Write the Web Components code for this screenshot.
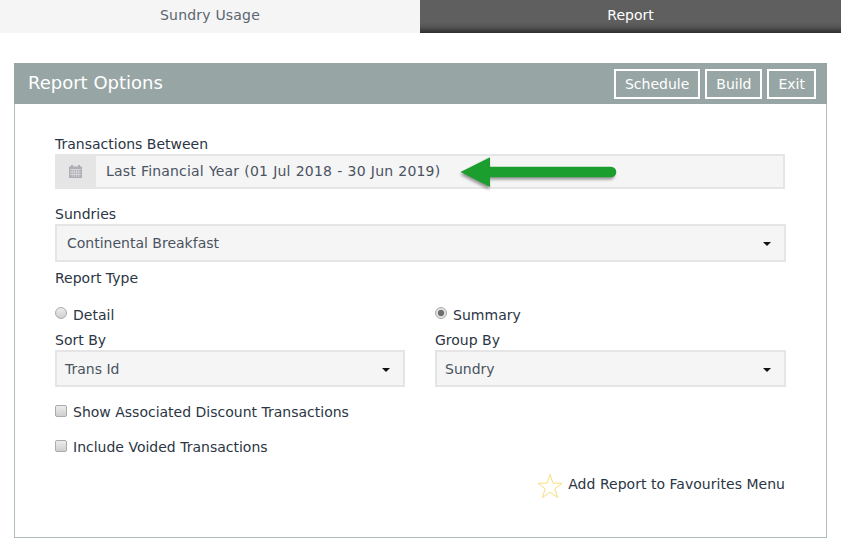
<!DOCTYPE html>
<html><head><meta charset="utf-8">
<style>
html,body{margin:0;padding:0;background:#fff}
body{font:14px/20px "DejaVu Sans",Verdana,sans-serif;color:#2b3544;width:841px;height:556px;overflow:hidden}
</style></head><body>
<tab-bar>
  <tab-item style="flex:0 0 420px">Sundry Usage</tab-item>
  <tab-item active style="flex:0 0 421px">Report</tab-item>
</tab-bar>
<report-panel heading="Report Options">
  <panel-button slot="actions">Schedule</panel-button>
  <panel-button slot="actions">Build</panel-button>
  <panel-button slot="actions">Exit</panel-button>

  <form-field label="Transactions Between">
    <date-input value="Last Financial Year (01 Jul 2018 - 30 Jun 2019)"></date-input>
  </form-field>
  <form-field label="Sundries" style="margin-top:15px">
    <select-box value="Continental Breakfast" style="--h:38px;--pad:10px;margin-right:-1px"></select-box>
  </form-field>
  <form-field label="Report Type" style="margin-top:6px"></form-field>
  <two-col style="margin-top:16px">
    <div>
      <choice-row type="radio">Detail</choice-row>
      <form-field label="Sort By" style="margin-top:6px"><select-box value="Trans Id"></select-box></form-field>
    </div>
    <div>
      <choice-row type="radio" checked>Summary</choice-row>
      <form-field label="Group By" style="margin-top:6px"><select-box value="Sundry"></select-box></form-field>
    </div>
  </two-col>
  <choice-row type="check" style="margin-top:15px">Show Associated Discount Transactions</choice-row>
  <choice-row type="check" style="margin-top:15px">Include Voided Transactions</choice-row>
  <favourite-link style="margin-top:13px">Add Report to Favourites Menu</favourite-link>
  <green-arrow></green-arrow>
</report-panel>

<script>
function def(name, css, html){
  customElements.define(name, class extends HTMLElement{
    connectedCallback(){
      if(this.shadowRoot) return;
      const r=this.attachShadow({mode:'open'});
      const get=a=>this.getAttribute(a)||'';
      r.innerHTML='<style>'+css+'</style>'+(typeof html==='function'?html(get,this):html);
    }
  });
}
def('tab-bar',':host{display:flex;height:33px}','<slot></slot>');
def('tab-item',`:host{display:flex;align-items:center;justify-content:center;background:#f5f5f5;color:#5b6670;padding-bottom:3px;box-sizing:border-box;letter-spacing:.2px}
:host([active]){background:linear-gradient(#5f5f5f 0,#5f5f5f 22px,#545454 27px,#3a3a3a 31px,#2d2d2d 33px);color:#fff;letter-spacing:0}`,'<slot></slot>');
def('report-panel',`:host{display:block;position:relative;margin:30px 14px 0;width:813px;height:475px;box-sizing:border-box;border:1px solid #b0bbbb;border-top:0}
header{height:41px;margin:0 -1px 0 -1px;background:#97a6a4;display:flex;align-items:center;justify-content:space-between;padding:0 11px 0 14px;color:#fff}
h2{margin:0;font:500 18px/24px "DejaVu Sans",Verdana,sans-serif;color:#fff;padding-bottom:1px}
nav{display:flex;gap:5px}
main{padding:30px 41px 0 40px;display:block}`,
g=>`<header><h2>${g('heading')}</h2><nav><slot name="actions"></slot></nav></header><main><slot></slot></main>`);
def('panel-button',`:host{display:block;height:30px;box-sizing:border-box;border:2px solid #fff;color:#fff;padding:0 9px;line-height:26px}`,'<slot></slot>');
def('form-field',`:host{display:block}
label{display:block;height:20px;line-height:20px}`,g=>`<label>${g('label')}</label><slot></slot>`);
const cal=`<svg width="13" height="14" viewBox="0 0 13 14"><path fill="#aeaeb6" d="M0 2.500h2V1h2v1.500h5V1h2v1.500h2V14H0z"/><path stroke="#e5e5e5" stroke-width=".6" fill="none" d="M1 5.500h11M1 8h11M1 10.500h11M3.200 5v8M5.400 5v8M7.600 5v8M9.800 5v8"/></svg>`;
def('date-input',`:host{display:flex;height:35px;box-sizing:border-box;border:2px solid #e5e5e5;background:#f5f5f5;color:#4a5361;line-height:31px}
i{width:39px;background:#e5e5e5;display:flex;align-items:center;justify-content:center}
svg{display:block;margin-left:-3px;margin-top:-1px}
span{padding-left:10px;letter-spacing:.17px;word-spacing:.5px}`,g=>`<i>${cal}</i><span>${g('value')}</span>`);
def('select-box',`:host{display:flex;align-items:center;justify-content:space-between;height:var(--h,37px);box-sizing:border-box;border:2px solid #e5e5e5;background:#f5f5f5;color:#4a5361;padding:0 13px 0 var(--pad,8px)}
b{width:0;height:0;border:4px solid transparent;border-top-color:#111;border-bottom:0;display:block;margin-top:2px}`,
g=>`<span>${g('value')}</span><b></b>`);
def('two-col',':host{display:grid;grid-template-columns:350px 351px;column-gap:30px;margin-right:-1px}','<slot></slot>');
def('choice-row',`:host{display:flex;align-items:center;gap:6px;height:20px;color:#2b3544}
i{width:12px;height:12px;box-sizing:border-box;display:block;background:linear-gradient(#ececec,#cfcfcf);border:1px solid #ababab;flex:none;position:relative;top:-1px}
:host([type=check]) i{border-radius:2px}
:host([type=radio]) i{border-radius:50%}
:host([type=radio]) span{padding-top:2px;letter-spacing:.03px}
:host([checked]) i{background:radial-gradient(circle,#6e6e6e 0,#6e6e6e 2.8px,#e2e2e2 3.6px)}`,'<i></i><span><slot></slot></span>');
def('favourite-link',`:host{display:flex;justify-content:flex-end;align-items:center;gap:5px;height:28px;color:#2b3544;letter-spacing:.03px}
svg{display:block;margin-top:3px}`,`<svg width="26" height="26" viewBox="0 0 26 26"><path fill="#fff" stroke="#f6df7c" stroke-width="1" stroke-linejoin="miter" d="M13 1.500l3 8.600 9 .2-7.100 5.500 2.600 8.700L13 19.300l-7.500 5.200 2.600-8.700L1 10.300l9-.2z"/></svg><span><slot></slot></span>`);
def('green-arrow',`:host{position:absolute;left:445px;top:90px;width:175px;height:40px;display:block;pointer-events:none}
svg{display:block;overflow:visible}`,`<svg width="175" height="40" viewBox="0 0 175 40"><defs><filter id="s" x="-10%" y="-50%" width="120%" height="200%"><feGaussianBlur stdDeviation="1.6"/></filter></defs>
<path transform="translate(-1 3)" fill="#555" opacity=".6" filter="url(#s)" d="M1 18.500 30 3.500V14h121a4.800 4.800 0 0 1 0 9.600H30V33.500z"/>
<path fill="#1c9e2f" d="M.5 19 30 4.300V13.700h121a5.300 5.300 0 0 1 0 10.600H30V34z"/></svg>`);
</script>
</body></html>
